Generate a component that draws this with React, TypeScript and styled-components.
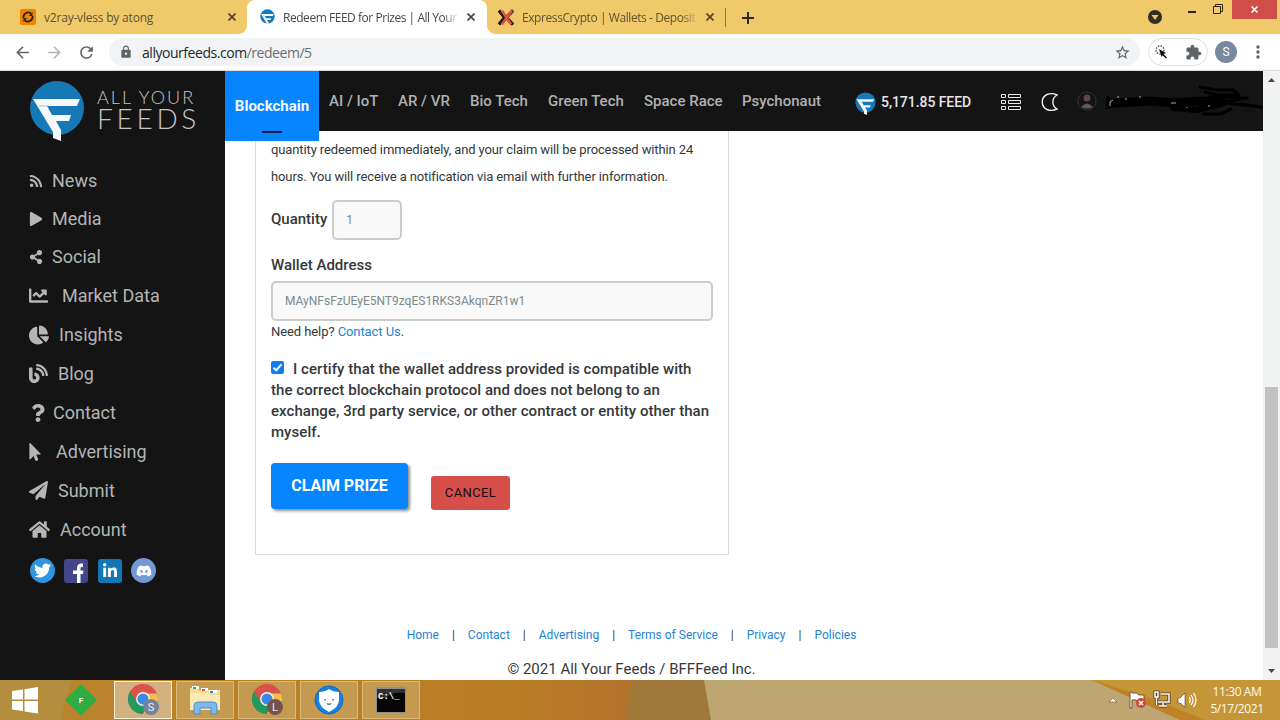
import React from 'react';
import styled, { createGlobalStyle } from 'styled-components';
import {
  FaBlog,
  FaChartLine,
  FaChartPie,
  FaDiscord,
  FaHome,
  FaLinkedinIn,
  FaMousePointer,
  FaPaperPlane,
  FaPlay,
  FaQuestion,
  FaRss,
  FaShareAlt,
  FaTwitter,
} from 'react-icons/fa';
import { MdArrowBack, MdArrowForward, MdExtension, MdLock, MdMoreVert, MdRefresh, MdStarBorder } from 'react-icons/md';

const GlobalStyle = createGlobalStyle`
  * { box-sizing: border-box; }
  body {
    margin: 0;
    overflow: hidden;
    font-family: Roboto, sans-serif;
  }
  svg { display: block; flex: none; }
`;

const Screen = styled.div`
  display: flex;
  flex-direction: column;
  width: 1280px;
  height: 720px;
  overflow: hidden;
  background: #fff;
`;

/* ---------- browser ---------- */

const TabStrip = styled.div`
  display: flex;
  height: 34px;
  flex: none;
  background: #efc96a;
  font-family: 'Open Sans', sans-serif;
  font-size: 12px;
`;

const Tab = styled.div<{ $width: number; $left: number; $active?: boolean }>`
  position: relative;
  display: flex;
  align-items: center;
  width: ${(p) => p.$width}px;
  padding: 0 ${(p) => (p.$active ? 12 : 11)}px 0 ${(p) => p.$left}px;
  color: ${(p) => (p.$active ? '#45494d' : '#5f5330')};
  background: ${(p) => (p.$active ? '#fff' : 'transparent')};
  border-radius: 8px 8px 0 0;
  ${(p) =>
    p.$active &&
    `
    &::before, &::after {
      content: '';
      position: absolute;
      bottom: 0;
      width: 8px;
      height: 8px;
    }
    &::before { left: -8px; background: radial-gradient(circle at 0 0, transparent 7.5px, #fff 8px); }
    &::after { right: -8px; background: radial-gradient(circle at 100% 0, transparent 7.5px, #fff 8px); }
  `}
`;

const TabTitle = styled.div<{ $spacing: number; $fade?: boolean }>`
  flex: 1;
  margin: 0 8px;
  white-space: nowrap;
  overflow: hidden;
  letter-spacing: ${(p) => p.$spacing}px;
  ${(p) => p.$fade && 'mask-image: linear-gradient(to right, #000 91%, transparent 100%);'}
`;

const NewTab = styled.div`
  display: flex;
  align-items: center;
  padding-left: 16px;
  margin: 8px 0 7px;
  border-left: 1px solid #a0762f;
`;

const WindowButtons = styled.div`
  display: flex;
  margin-left: auto;
  padding-right: 3px;
`;

const CloseWindow = styled.div`
  display: flex;
  align-items: center;
  justify-content: center;
  width: 45px;
  height: 19px;
  background: #cf4f48;
`;

const Toolbar = styled.div`
  display: flex;
  align-items: center;
  height: 37px;
  flex: none;
  padding: 0 12px 0 13px;
  border-bottom: 1px solid #d8dadd;
  color: #5f6368;
`;

const ToolbarIcons = styled.div`
  display: flex;
  align-items: center;
  gap: 13px;
  width: 96px;
`;

const Omnibox = styled.div`
  display: flex;
  align-items: center;
  width: 1031px;
  height: 28px;
  padding: 0 9px 0 10px;
  border-radius: 14px;
  background: #f1f3f4;
  font-family: 'Open Sans', sans-serif;
  font-size: 14px;
  letter-spacing: -0.46px;
`;

const Url = styled.div`
  flex: 1;
  margin-left: 9px;
  color: #6c7073;
  b { font-weight: 400; color: #25282b; }
`;

const Extensions = styled.div`
  display: flex;
  align-items: center;
  justify-content: space-between;
  width: 60px;
  height: 28px;
  margin-left: 8px;
  padding: 0 5px;
  border: 1px solid #dcdee1;
  border-radius: 14px;
`;

const Profile = styled.div`
  display: flex;
  align-items: center;
  justify-content: center;
  width: 22px;
  height: 22px;
  margin: 0 11px 0 7px;
  border-radius: 50%;
  background: #7788a0;
  color: #fff;
  font-size: 12px;
`;

const Page = styled.div`
  display: flex;
  height: 609px;
  flex: none;
`;

const Scrollbar = styled.div`
  display: flex;
  flex-direction: column;
  align-items: center;
  justify-content: space-between;
  width: 17px;
  padding: 7px 0;
  background: #f1f2f2;
`;

const ScrollTrack = styled.div`
  width: 13px;
  flex: 1;
  margin: 6px 0 21px;
  padding-top: 299px;
  background-clip: content-box;
  background-color: #c1c1c1;
`;

/* ---------- sidebar ---------- */

const Sidebar = styled.aside`
  width: 225px;
  flex: none;
  background: #141414;
  color: #b5b5b5;
`;

const Brand = styled.div`
  display: flex;
  height: 90px;
  padding: 9px 0 0 29px;
`;

const BrandName = styled.div`
  display: flex;
  flex-direction: column;
  margin: 7px 0 0 12px;
  color: #c6c4c4;
  font-family: Lato, sans-serif;
  font-weight: 300;
  white-space: nowrap;
`;

const BrandTop = styled.span`
  font-size: 18px;
  line-height: 20px;
  letter-spacing: 2px;
`;

const BrandBottom = styled.span`
  font-size: 28px;
  line-height: 23px;
  letter-spacing: 3.7px;
`;

const MenuItem = styled.a<{ $height: number; $gap: number }>`
  display: flex;
  align-items: center;
  height: ${(p) => p.$height}px;
  padding-left: 29px;
  gap: ${(p) => p.$gap}px;
  font-size: 18px;
  svg { margin-top: ${(p) => (p.$height === 38 ? 2 : 0)}px; }
`;

const PointerIcon = styled(FaMousePointer)`
  margin-left: -3px;
`;

const Socials = styled.div`
  display: flex;
  gap: 9.4px;
  padding: 9px 0 0 30px;
`;

const Social = styled.a<{ $color: string; $round?: boolean }>`
  display: flex;
  align-items: center;
  justify-content: center;
  width: ${(p) => (p.$round ? 25 : 24)}px;
  height: ${(p) => (p.$round ? 25 : 24)}px;
  margin-top: ${(p) => (p.$round ? 0 : 1)}px;
  overflow: hidden;
  border-radius: ${(p) => (p.$round ? '50%' : '3px')};
  background: ${(p) => p.$color};
  color: #fff;
`;

/* ---------- top navigation ---------- */

const Main = styled.main`
  width: 1038px;
  flex: none;
`;

const TopBar = styled.header`
  display: flex;
  height: 60px;
  background: #141414;
  color: #b0b0b0;
  font-size: 15px;
  font-weight: 500;
  white-space: nowrap;
`;

const ActiveTopic = styled.div`
  position: relative;
  display: flex;
  flex-direction: column;
  align-items: center;
  justify-content: space-between;
  width: 94px;
  height: 70px;
  padding: 25px 0 8px;
  background: #0784ff;
  color: #f2f8ff;
  font-weight: 700;
  line-height: 20px;
  &::after {
    content: '';
    width: 20px;
    height: 2px;
    background: #0c2340;
  }
`;

const Topic = styled.div<{ $width: number }>`
  width: ${(p) => p.$width}px;
  padding-left: 10px;
  line-height: 60px;
`;

const Account = styled.div`
  display: flex;
  align-items: center;
  height: 62px;
  & > svg:first-child { margin-top: 3px; }
`;

const Balance = styled.span`
  width: 120px;
  margin-left: 5px;
  color: #e6e6e6;
  font-size: 14px;
  letter-spacing: -0.06px;
`;

/* ---------- redeem form ---------- */

const Content = styled.div`
  height: 549px;
  padding-left: 30px;
  color: #35383b;
`;

const Card = styled.section`
  width: 474px;
  height: 424px;
  padding: 5px 15px 0;
  border: 1px solid #d9dddf;
  border-top: 0;
`;

const Info = styled.p`
  margin: 0;
  font-size: 13px;
  line-height: 27px;
  letter-spacing: -0.12px;
  white-space: nowrap;
`;

const Field = styled.div`
  display: flex;
  gap: 5px;
  height: 40px;
  margin: 10px 0 15px;
  line-height: 38px;
`;

const Label = styled.label`
  display: block;
  font-size: 15px;
  font-weight: 500;
  white-space: nowrap;
`;

const BlockLabel = styled(Label)`
  padding-bottom: 6px;
  line-height: 20px;
`;

const Input = styled.input<{ $width: number }>`
  width: ${(p) => p.$width}px;
  height: 40px;
  display: block;
  padding: 0 12px;
  border: 2px solid #cbcccc;
  border-radius: 5px;
  background: #f9f9f9;
  color: #7b8b8b;
  font: 12px Roboto, sans-serif;
`;

const Help = styled.div`
  margin-bottom: 17px;
  font-size: 13px;
  line-height: 21px;
  letter-spacing: -0.08px;
  a { color: #2583d4; }
`;

const Certify = styled.label`
  display: block;
  font-size: 15px;
  font-weight: 500;
  line-height: 21px;
  letter-spacing: 0.055px;
  white-space: nowrap;
`;

const CheckBox = styled.span`
  display: inline-flex;
  align-items: center;
  justify-content: center;
  width: 13px;
  height: 13px;
  margin-right: 9px;
  border-radius: 2px;
  background: #0c7ff0;
`;

const Actions = styled.div`
  display: flex;
  align-items: flex-start;
  gap: 23px;
  margin-top: 20px;
`;

const ClaimButton = styled.button`
  width: 137px;
  height: 46px;
  padding: 0 0 2px;
  border: 0;
  border-radius: 4px;
  background: #0784ff;
  box-shadow: 2px 2px 3px rgba(0, 0, 0, 0.45);
  color: #fff;
  font: 700 16px Roboto, sans-serif;
`;

const CancelButton = styled.button`
  width: 79px;
  height: 34px;
  margin-top: 13px;
  padding: 0 0 2px;
  border: 0;
  border-radius: 3px;
  background: #d64f4a;
  color: #1b0c0c;
  font: 13px Roboto, sans-serif;
  letter-spacing: 0.4px;
`;

const Footer = styled.footer`
  width: 813px;
  margin-left: -30px;
  padding-top: 70px;
`;

const FooterLinks = styled.nav`
  display: flex;
  justify-content: center;
  gap: 13px;
  font-size: 12px;
  line-height: 20px;
  a { color: #2583d4; }
`;

const Copyright = styled.div`
  margin-top: 14px;
  text-align: center;
  font-size: 15px;
  line-height: 20px;
`;

/* ---------- taskbar ---------- */

const Taskbar = styled.div`
  position: relative;
  display: flex;
  align-items: center;
  height: 40px;
  flex: none;
`;

const Wallpaper = styled.svg`
  position: absolute;
  inset: 0;
`;

const TaskIcons = styled.div`
  position: relative;
  display: flex;
  align-items: center;
  gap: 4px;
`;

const Pinned = styled.div<{ $width: number }>`
  display: flex;
  justify-content: center;
  width: ${(p) => p.$width}px;
`;

const TaskButton = styled.div<{ $active?: boolean }>`
  display: flex;
  align-items: center;
  justify-content: center;
  width: 58px;
  height: 38px;
  border: 1px solid ${(p) => (p.$active ? '#fff3da' : '#dcb878')};
  background: ${(p) => (p.$active ? '#d2b080' : '#c39a4f')};
`;

const Tray = styled.div`
  position: relative;
  display: flex;
  align-items: center;
  margin-left: auto;
`;

const Clock = styled.div`
  width: 86px;
  margin-left: -5px;
  text-align: center;
  color: #fffaf0;
  font-family: 'Open Sans', sans-serif;
  font-size: 12px;
  line-height: 17px;
  letter-spacing: -0.4px;
`;

const FeedLogo = ({ width }: { width: number }) => (
  <svg width={width} height={(width * 62) / 56} viewBox="0 0 56 62">
    <circle cx="28" cy="28" r="27" fill="#1678b5" />
    <path d="M4 19H51L48 26H18L23 35H42L40 41H27L32 50V61L24 58V52Z" fill="#f4f7fb" />
    <path d="M10 26H20" stroke="#a9bdd0" />
  </svg>
);

const Cross = ({ color = '#5b3c32', size = 8 }: { color?: string; size?: number }) => (
  <svg width={size} height={size} viewBox="0 0 8 8" stroke={color} strokeWidth="1.7">
    <path d="M.5 .5L7.5 7.5M7.5 .5L.5 7.5" />
  </svg>
);

const Chrome = ({ letter, color }: { letter: string; color: string }) => (
  <svg width="32" height="32" viewBox="0 0 32 32">
    <circle cx="16" cy="15" r="15" fill="#d9534a" />
    <path d="M3 7.500A15 15 0 0 0 16 30L22 19L9.500 18Z" fill="#219a5b" />
    <path d="M30 9.500A15 15 0 0 1 16 30L22.500 18L17 9.500Z" fill="#f4c04c" />
    <circle cx="16" cy="15" r="7" fill="#f3f1ec" />
    <circle cx="16" cy="15" r="5.500" fill="#3d8ae6" />
    <circle cx="24" cy="23" r="8" fill={color} />
    <text x="24" y="27" textAnchor="middle" fill="#f0eeee" fontSize="11" fontFamily="Roboto">
      {letter}
    </text>
  </svg>
);

const menu = [
  { label: 'News', icon: <FaRss size={14} />, height: 38, gap: 9 },
  { label: 'Media', icon: <FaPlay size={14} />, height: 38, gap: 9 },
  { label: 'Social', icon: <FaShareAlt size={14} />, height: 38, gap: 9 },
  { label: 'Market Data', icon: <FaChartLine size={19} />, height: 40, gap: 14 },
  { label: 'Insights', icon: <FaChartPie size={20} />, height: 39, gap: 10 },
  { label: 'Blog', icon: <FaBlog size={19} />, height: 39, gap: 10 },
  { label: 'Contact', icon: <FaQuestion size={18} />, height: 39, gap: 6 },
  { label: 'Advertising', icon: <PointerIcon size={18} />, height: 39, gap: 12 },
  { label: 'Submit', icon: <FaPaperPlane size={19} />, height: 39, gap: 10 },
  { label: 'Account', icon: <FaHome size={21} />, height: 39, gap: 10 },
];

const topics = [
  { label: 'AI / IoT', width: 69 },
  { label: 'AR / VR', width: 72 },
  { label: 'Bio Tech', width: 78 },
  { label: 'Green Tech', width: 96 },
  { label: 'Space Race', width: 98 },
  { label: 'Psychonaut', width: 123 },
];

const footerLinks = ['Home', 'Contact', 'Advertising', 'Terms of Service', 'Privacy', 'Policies'];

const Browser = () => (
  <>
    <TabStrip>
      <Tab $width={247} $left={20}>
        <svg width="16" height="16" viewBox="0 0 16 16">
          <rect width="16" height="16" rx="2" fill="#f08400" />
          <path
            d="M3.500 9A4.700 4.700 0 0 1 11 4.500M12.500 7A4.700 4.700 0 0 1 5 11.500"
            fill="none"
            stroke="#2c2110"
            strokeWidth="1.8"
          />
          <path d="M12.500 3V7H9ZM3.500 13V9H7Z" fill="#2c2110" />
        </svg>
        <TabTitle $spacing={-0.2}>v2ray-vless by atong</TabTitle>
        <Cross />
      </Tab>
      <Tab $width={240} $left={13} $active>
        <FeedLogo width={15} />
        <TabTitle $spacing={-0.46} $fade>Redeem FEED for Prizes | All Your</TabTitle>
        <Cross color="#44474a" />
      </Tab>
      <Tab $width={238} $left={11}>
        <svg width="16" height="17" viewBox="0 0 17 17" strokeWidth="3.5">
          <path d="M1 1L7 8.500L1 16M16 1L9 8.500L16 16" stroke="#1e1a18" fill="none" />
          <path d="M4 1L14 16M15 1L4 16" stroke="#e0523c" strokeWidth="2.8" />
        </svg>
        <TabTitle $spacing={-0.42} $fade>ExpressCrypto | Wallets - Deposit</TabTitle>
        <Cross />
      </Tab>
      <NewTab>
        <svg width="12" height="12" viewBox="0 0 12 12" stroke="#2d2a20" strokeWidth="2">
          <path d="M6 0V12M0 6H12" />
        </svg>
      </NewTab>
      <WindowButtons>
        <svg width="84" height="34" viewBox="0 0 84 34">
          <circle cx="7" cy="17" r="7" fill="#332d22" />
          <path d="M3.500 15H10.500L7 20Z" fill="#efc96a" />
          <path d="M40 12H48" stroke="#2b2417" strokeWidth="2" />
          <path d="M65.500 6.500H72.500V13.500H65.500ZM67.500 6V4.500H74.500V11.500H73" fill="none" stroke="#2b2417" />
        </svg>
        <CloseWindow>
          <Cross color="#fff" size={7} />
        </CloseWindow>
      </WindowButtons>
    </TabStrip>
    <Toolbar>
      <ToolbarIcons>
        <MdArrowBack size={19} />
        <MdArrowForward size={19} color="#b2b4b6" />
        <MdRefresh size={19} />
      </ToolbarIcons>
      <Omnibox>
        <MdLock size={14} />
        <Url>
          <b>allyourfeeds.com</b>/redeem/5
        </Url>
        <MdStarBorder size={17} />
      </Omnibox>
      <Extensions>
        <svg width="15" height="15" viewBox="0 0 15 15">
          <circle cx="6" cy="5" r="4" fill="none" stroke="#55585c" strokeWidth="1.4" strokeDasharray="1.500 1.200" />
          <path d="M5 4L12 8L9.500 9L13 12.500L12 13.500L8.500 10.500L7.500 12Z" fill="#111" />
        </svg>
        <MdExtension size={17} />
      </Extensions>
      <Profile>S</Profile>
      <MdMoreVert size={20} />
    </Toolbar>
  </>
);

const SideMenu = () => (
  <Sidebar>
    <Brand>
      <FeedLogo width={56} />
      <BrandName>
        <BrandTop>ALL YOUR</BrandTop>
        <BrandBottom>FEEDS</BrandBottom>
      </BrandName>
    </Brand>
    {menu.map((item) => (
      <MenuItem key={item.label} $height={item.height} $gap={item.gap}>
        {item.icon}
        {item.label}
      </MenuItem>
    ))}
    <Socials>
      <Social $color="#2f93df" $round>
        <FaTwitter size={17} />
      </Social>
      <Social $color="#43468a">
        <svg width="24" height="24" viewBox="0 0 24 24">
          <path
            d="M13 24V15H9V11.500H13V9C13 5.500 15 4 19 4.500V8H17.500Q16.500 8 16.500 9.500V11.500H19.500L19 15H16.500V24Z"
            fill="#fff"
          />
        </svg>
      </Social>
      <Social $color="#1277b5">
        <FaLinkedinIn size={16} />
      </Social>
      <Social $color="#7398d6" $round>
        <FaDiscord size={16} />
      </Social>
    </Socials>
  </Sidebar>
);

const Navigation = () => (
  <TopBar>
    <ActiveTopic>Blockchain</ActiveTopic>
    {topics.map((topic) => (
      <Topic key={topic.label} $width={topic.width}>
        {topic.label}
      </Topic>
    ))}
    <Account>
      <FeedLogo width={21} />
      <Balance>5,171.85 FEED</Balance>
      <svg width="262" height="60" viewBox="0 0 262 60" fill="none">
        <g stroke="#e8e8e8">
          <path d="M.5 22.500H4.500V25.500H.5ZM.5 28.500H4.500V31.500H.5ZM.5 34.500H4.500V37.500H.5Z" />
          <path d="M7.500 22.500H19.500V25.500H7.500ZM7.500 28.500H19.500V31.500H7.500ZM7.500 34.500H19.500V37.500H7.500Z" />
        </g>
        <path d="M56 23Q51 20.500 46 22.500A8.300 8.300 0 0 0 46 37.500Q51 39.500 56 37A8 8 0 0 1 56 23Z" stroke="#eee" strokeWidth="1.4" />
        <circle cx="86" cy="29" r="9" stroke="#4b4949" strokeDasharray="1.500 1" />
        <circle cx="86" cy="26" r="3.500" fill="#5e4647" />
        <path d="M80 35Q86 28 92 35Q86 38 80 35Z" fill="#5c5959" />
        <g stroke="#000" strokeLinecap="round" strokeLinejoin="round">
          <path d="M107 26V35L122 30H215" strokeWidth="4" />
          <path d="M114 31L150 29L174 31L198 29L222 30" strokeWidth="9" />
          <path d="M172 36L196 38L220 32" strokeWidth="6" />
          <path d="M199 15L215 18H232L238 23H216L204 20M208 25L246 26L218 31M224 31L260 35L240 32M203 42H220L230 37" strokeWidth="3" />
        </g>
        <path d="M109 34V30L112 28M116 25H118M125 26V28M138 25H140M170 31H175M186 35V36M207 34H209" stroke="#aaa" />
      </svg>
    </Account>
  </TopBar>
);

const RedeemForm = () => (
  <Card>
    <Info>
      quantity redeemed immediately, and your claim will be processed within 24
      <br />
      hours. You will receive a notification via email with further information.
    </Info>
    <Field>
      <Label>Quantity</Label>
      <Input $width={70} defaultValue="1" />
    </Field>
    <BlockLabel>Wallet Address</BlockLabel>
    <Input $width={442} defaultValue="MAyNFsFzUEyE5NT9zqES1RKS3AkqnZR1w1" />
    <Help>
      Need help? <a>Contact Us</a>.
    </Help>
    <Certify>
      <CheckBox>
        <svg width="11" height="13" viewBox="0 0 11 13" fill="none" stroke="#fff" strokeWidth="2">
          <path d="M1.500 6.800L4.200 9.300L9.500 3.300" />
        </svg>
      </CheckBox>
      I certify that the wallet address provided is compatible with
      <br />
      the correct blockchain protocol and does not belong to an
      <br />
      exchange, 3rd party service, or other contract or entity other than
      <br />
      myself.
    </Certify>
    <Actions>
      <ClaimButton>CLAIM PRIZE</ClaimButton>
      <CancelButton>CANCEL</CancelButton>
    </Actions>
  </Card>
);

const WindowsTaskbar = () => (
  <Taskbar>
    <Wallpaper width="1280" height="40" viewBox="0 0 1280 40">
      <defs>
        <linearGradient id="wood">
          <stop offset="0" stopColor="#bb842c" />
          <stop offset="0.400" stopColor="#b97d25" />
          <stop offset="0.500" stopColor="#b3722d" />
        </linearGradient>
      </defs>
      <rect width="1280" height="40" fill="url(#wood)" />
      <path d="M0 0H72L60 40H0Z" fill="#b58d3e" />
      <path d="M632 0H705L712 40H626Z" fill="#a0793a" />
      <path d="M704 0H1092L1190 40H711Z" fill="#bea673" />
      <path d="M1090 0H1280V40H1204Z" fill="#c49637" />
      <path d="M1092 0L1150 18L1205 40H1180L1120 13Z" fill="#c18127" />
    </Wallpaper>
    <TaskIcons>
      <Pinned $width={50}>
        <svg width="28" height="27" viewBox="0 0 28 27" fill="#fff">
          <path d="M1 4L12 2.500V12.500H1ZM13.500 2.200L27 0V12.500H13.500ZM1 14H12V24L1 22.500ZM13.500 14H27V26.500L13.500 24.500Z" />
        </svg>
      </Pinned>
      <Pinned $width={56}>
        <svg width="34" height="34" viewBox="0 0 34 34">
          <path d="M16 1L32 17L16 33L0 17Z" fill="#2fac42" />
          <text x="16" y="20" textAnchor="middle" fill="#fff" fontSize="8" fontWeight="700" fontFamily="Roboto">
            F
          </text>
        </svg>
      </Pinned>
      <TaskButton $active>
        <Chrome letter="S" color="#74859b" />
      </TaskButton>
      <TaskButton>
        <svg width="32" height="30" viewBox="0 0 32 30">
          <path d="M1 3H10V5H31V25H1Z" fill="#f4dc91" />
          <path d="M3 1H10V4H3ZM12 3H19V6H12ZM20 5H28V8H20Z" fill="#fff" />
          <path d="M4 2H7V4H4Z" fill="#3ba552" />
          <path d="M13 4H16V6H13Z" fill="#d65745" />
          <path d="M21 6H24V8H21Z" fill="#3485cf" />
          <path d="M1 8H18L20 10H31V25H1Z" fill="#f9e9b5" />
          <path d="M5 29V21Q5 17 9 17H24Q28 17 28 21V29H22V23H11V29Z" fill="#7db9e9" stroke="#4c90cb" />
        </svg>
      </TaskButton>
      <TaskButton>
        <Chrome letter="L" color="#76534a" />
      </TaskButton>
      <TaskButton>
        <svg width="30" height="30" viewBox="0 0 30 30">
          <circle cx="15" cy="15" r="14" fill="#1582e2" stroke="#1767b1" />
          <path d="M15 4Q19 7 25 7V15Q25 22 15 27Q5 22 5 15V7Q11 7 15 4Z" fill="#fff" />
          <path d="M11 14V15.500M19 14V15.500M13 18.500Q15 20 17 18.500" fill="none" stroke="#526984" strokeWidth="1.5" />
        </svg>
      </TaskButton>
      <TaskButton>
        <svg width="30" height="26" viewBox="0 0 30 26">
          <rect width="30" height="26" fill="#8f8e88" />
          <path d="M1 2H29V25H1Z" fill="#060606" />
          <path d="M1 2H29V6Q15 5 10 11H1Z" fill="#303234" />
          <text x="2" y="12" fill="#fff" fontSize="9" fontWeight="700" fontFamily="Liberation Mono">
            C:\_
          </text>
        </svg>
      </TaskButton>
    </TaskIcons>
    <Tray>
      <svg width="84" height="24" viewBox="0 0 84 24">
        <path d="M4 14L8 10L12 14Z" fill="#fff" stroke="#6e4a2b" strokeWidth=".6" />
        <g stroke="#5a3927" strokeWidth=".8" fill="#fff">
          <path d="M25 4H27V5Q32 4 34 7H39V13H33Q30 11 27 12V20H25Z" />
        </g>
        <circle cx="36" cy="15" r="5" fill="#ce4739" />
        <path d="M34 13L38 17M38 13L34 17" stroke="#fff" strokeWidth="1.600" />
        <path
          d="M55.500 6H64V14H53M58 15V18M54 18H62M50 4H53V9H50ZM51.500 9V17"
          fill="none"
          stroke="#5a3927"
          strokeWidth="3.200"
        />
        <path
          d="M55.500 6H64V14H53M58 15V18M54 18H62M50 4H53V9H50ZM51.500 9V17"
          fill="none"
          stroke="#fff"
          strokeWidth="1.500"
        />
        <path d="M73 10H75L80 5V19L75 15H73Z" fill="#fff" stroke="#5a3927" strokeWidth=".6" />
      </svg>
      <svg width="10" height="24" viewBox="0 0 10 24" fill="none" stroke="#fff" strokeWidth="1.200">
        <path d="M0 9Q2.500 12 0 15M2 7Q6 12 2 17M4.500 5Q9.500 12 4.500 19" />
      </svg>
      <Clock>
        11:30 AM
        <br />
        5/17/2021
      </Clock>
    </Tray>
  </Taskbar>
);

const App = () => (
  <Screen>
    <GlobalStyle />
    <Browser />
    <Page>
      <SideMenu />
      <Main>
        <Navigation />
        <Content>
          <RedeemForm />
          <Footer>
            <FooterLinks>
              {footerLinks.map((link, idx) => (
                <React.Fragment key={link}>
                  {idx > 0 && <span>|</span>}
                  <a>{link}</a>
                </React.Fragment>
              ))}
            </FooterLinks>
            <Copyright>© 2021 All Your Feeds / BFFFeed Inc.</Copyright>
          </Footer>
        </Content>
      </Main>
      <Scrollbar>
        <svg width="7" height="4" viewBox="0 0 7 4">
          <path d="M0 4L3.500 0L7 4Z" fill="#55434a" />
        </svg>
        <ScrollTrack />
        <svg width="7" height="4" viewBox="0 0 7 4">
          <path d="M0 0L3.500 4L7 0Z" fill="#55434a" />
        </svg>
      </Scrollbar>
    </Page>
    <WindowsTaskbar />
  </Screen>
);

export default App;
